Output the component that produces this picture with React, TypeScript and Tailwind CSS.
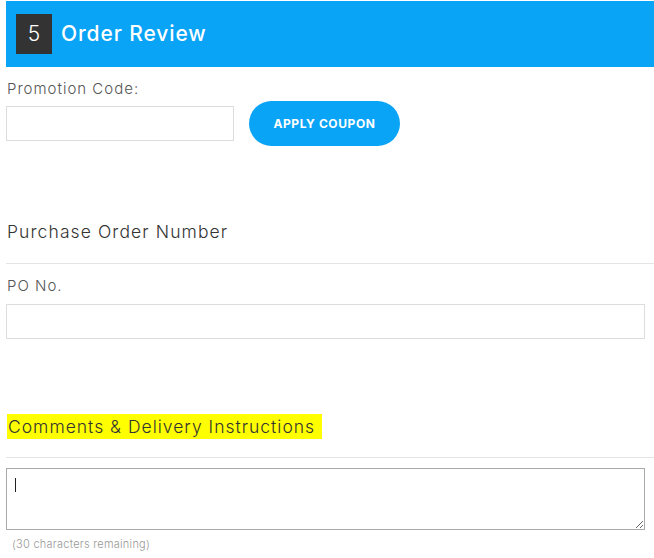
import React from "react";

const font = { fontFamily: "Inter, 'Open Sans', sans-serif" };

export default function App() {
  return (
    <div className="min-h-[558px] bg-white pl-[6px] pt-px" style={font}>
      {/* step header */}
      <div className="flex h-[66px] items-center bg-[#0aa4f6] pl-[10px]">
        <div className="flex h-[40px] w-[36px] items-center justify-center bg-[#333] text-[21px] font-light text-white">
          5
        </div>
        <h2 className="ml-[9px] text-[21px] font-medium tracking-[0.9px] text-white">Order Review</h2>
      </div>

      <p className="mt-[12px] pl-px text-[15px] font-light leading-[20px] tracking-[1px] text-[#555]">
        Promotion Code:
      </p>
      <div className="mt-[2px] flex items-center gap-[15px]">
        <input className="h-[35px] w-[228px] border border-[#ddd] outline-none" />
        <button className="h-[45px] w-[151px] rounded-full bg-[#0aa4f6] text-[12px] font-bold tracking-[0.6px] text-white">
          APPLY COUPON
        </button>
      </div>

      <h3 className="mt-[75px] pl-px text-[17.5px] font-light leading-[22px] tracking-[1.1px] text-[#333]">
        Purchase Order Number
      </h3>
      <hr className="mt-[20px] border-[#e5e5e5]" />
      <p className="mt-[12px] pl-px text-[15px] font-light leading-[20px] tracking-[1px] text-[#555]">PO No.</p>
      <input className="mt-[8px] block h-[35px] w-[639px] border border-[#ddd] outline-none" />

      <h3 className="mt-[77px] pl-px text-[17.5px] font-light leading-[22px] tracking-[1px] text-[#333]">
        <span className="bg-[#ffff00] py-[2px] pl-px pr-[7px]">Comments &amp; Delivery Instructions</span>
      </h3>
      <hr className="mt-[19px] border-[#e5e5e5]" />
      <div className="relative mt-[10px] w-[639px]">
        <textarea className="block h-[62px] w-full resize-y border border-[#aaa] outline-none" />
        <span className="absolute left-[9px] top-[10px] h-[14px] w-px bg-[#222]" />
      </div>
      <p className="mt-[6px] pl-[6px] text-[11px] font-light leading-[16px] tracking-[0.25px] text-[#999]">
        (30 characters remaining)
      </p>
    </div>
  );
}
